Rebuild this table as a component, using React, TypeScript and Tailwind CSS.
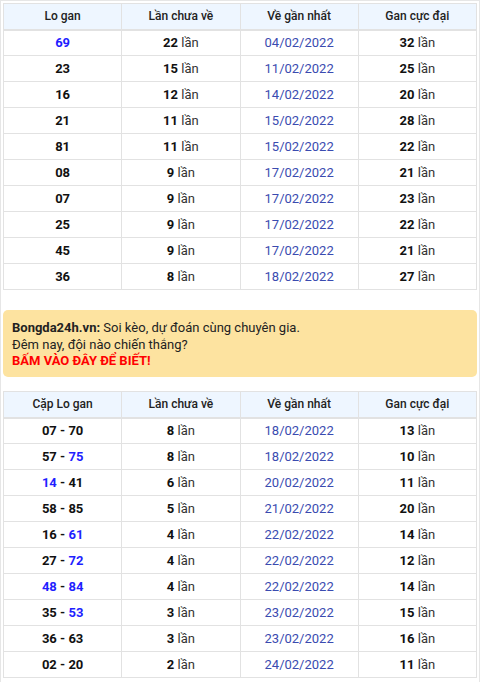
import React from "react";

type Row = { a: React.ReactNode; miss: number; last: string; max: number };

const hl = (s: string) => <span className="text-[#1f1fff]">{s}</span>;

const singles: Row[] = [
  { a: hl("69"), miss: 22, last: "04/02/2022", max: 32 },
  { a: "23", miss: 15, last: "11/02/2022", max: 25 },
  { a: "16", miss: 12, last: "14/02/2022", max: 20 },
  { a: "21", miss: 11, last: "15/02/2022", max: 28 },
  { a: "81", miss: 11, last: "15/02/2022", max: 22 },
  { a: "08", miss: 9, last: "17/02/2022", max: 21 },
  { a: "07", miss: 9, last: "17/02/2022", max: 23 },
  { a: "25", miss: 9, last: "17/02/2022", max: 22 },
  { a: "45", miss: 9, last: "17/02/2022", max: 21 },
  { a: "36", miss: 8, last: "18/02/2022", max: 27 },
];

const pairs: Row[] = [
  { a: <>07 - 70</>, miss: 8, last: "18/02/2022", max: 13 },
  { a: <>57 - {hl("75")}</>, miss: 8, last: "18/02/2022", max: 10 },
  { a: <>{hl("14")} - 41</>, miss: 6, last: "20/02/2022", max: 11 },
  { a: <>58 - 85</>, miss: 5, last: "21/02/2022", max: 20 },
  { a: <>16 - {hl("61")}</>, miss: 4, last: "22/02/2022", max: 14 },
  { a: <>27 - {hl("72")}</>, miss: 4, last: "22/02/2022", max: 12 },
  { a: <>{hl("48")} - {hl("84")}</>, miss: 4, last: "22/02/2022", max: 14 },
  { a: <>35 - {hl("53")}</>, miss: 3, last: "23/02/2022", max: 15 },
  { a: <>36 - 63</>, miss: 3, last: "23/02/2022", max: 16 },
  { a: <>02 - 20</>, miss: 2, last: "24/02/2022", max: 11 },
];

function GanTable({ first, rows }: { first: string; rows: Row[] }) {
  const th = "h-[26px] border border-[#e2e2e2] border-b-2 font-medium text-[12px] text-[#222] p-0";
  const td = "h-[26px] border border-[#e2e2e2] p-0 text-[13px] text-center";
  return (
    <table className="w-[474px] table-fixed border-collapse">
      <thead>
        <tr className="bg-[#eef6ff]">
          <th className={th}>{first}</th>
          <th className={th}>Lần chưa về</th>
          <th className={th}>Về gần nhất</th>
          <th className={th}>Gan cực đại</th>
        </tr>
      </thead>
      <tbody>
        {rows.map((r, i) => (
          <tr key={i}>
            <td className={`${td} font-bold text-[#111]`}>{r.a}</td>
            <td className={td}>
              <span className="font-bold text-[#111]">{r.miss}</span>{" "}
              <span className="text-[#333]">lần</span>
            </td>
            <td className={`${td} text-[#3a4bb0]`}>{r.last}</td>
            <td className={td}>
              <span className="font-bold text-[#111]">{r.max}</span>{" "}
              <span className="text-[#333]">lần</span>
            </td>
          </tr>
        ))}
      </tbody>
    </table>
  );
}

export default function App() {
  return (
    <div className="w-[480px] h-[682px] overflow-hidden bg-white border-x border-t border-[#e6e6e6] pt-[2px] pl-[2px] font-['Roboto',_'Liberation_Sans',_sans-serif]">
      <GanTable first="Lo gan" rows={singles} />

      <div className="mt-[20px] w-[474px] h-[67px] rounded-[5px] bg-[#fde3a0] px-[9px] pt-[10px] text-[13px] leading-[16.5px] text-[#222]">
        <p>
          <b className="font-bold">Bongda24h.vn:</b> Soi kèo, dự đoán cùng chuyên gia.
        </p>
        <p>Đêm nay, đội nào chiến thắng?</p>
        <p className="font-bold text-[#ff0000]">BẤM VÀO ĐÂY ĐỂ BIẾT!</p>
      </div>

      <div className="mt-[14px]">
        <GanTable first="Cặp Lo gan" rows={pairs} />
      </div>
    </div>
  );
}
